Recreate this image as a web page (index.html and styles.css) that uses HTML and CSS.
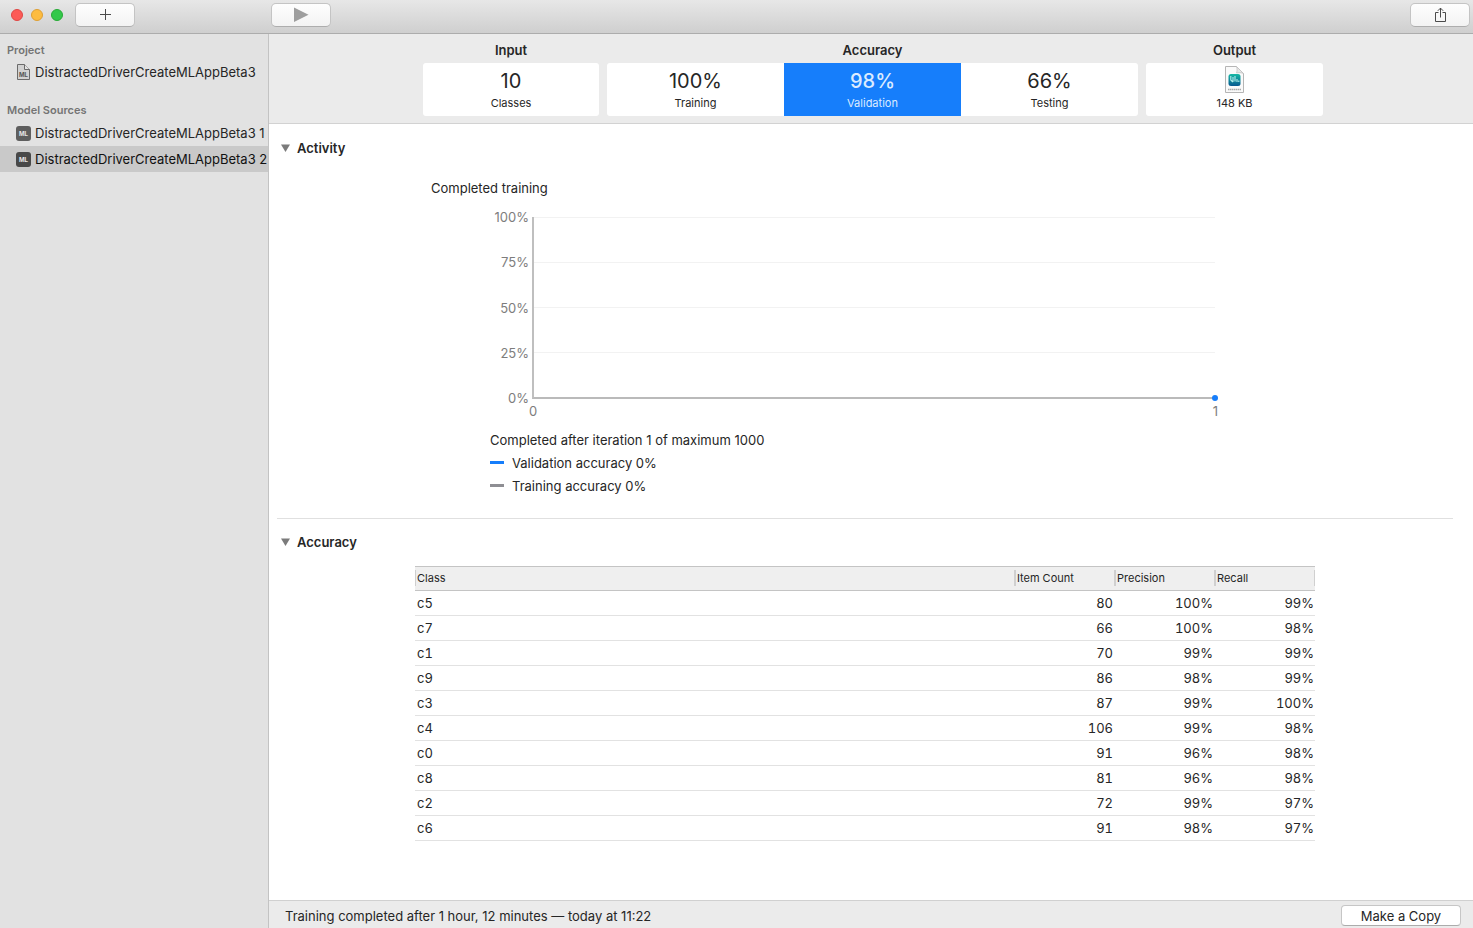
FILE: index.html
```html
<!DOCTYPE html>
<html lang="en">
<head>
<meta charset="utf-8">
<title>DistractedDriverCreateMLAppBeta3</title>
<link rel="stylesheet" href="styles.css">
</head>
<body>
<div class="window">
  <header class="titlebar">
    <div class="titlebar-left">
      <div class="lights">
        <button class="light light-close" aria-label="Close"></button>
        <button class="light light-minimize" aria-label="Minimize"></button>
        <button class="light light-zoom" aria-label="Zoom"></button>
      </div>
      <button class="tool-button" aria-label="Add">
        <svg width="12" height="12" viewBox="0 0 12 12"><path d="M6.500 0v11M1 5.500h11" stroke="#4a4a4a" fill="none"/></svg>
      </button>
    </div>
    <button class="tool-button" aria-label="Train">
      <svg width="16" height="16" viewBox="0 0 16 16"><path d="M1 0.5L15.5 7.8L1 15z" fill="#9e9e9e"/></svg>
    </button>
    <button class="tool-button share" aria-label="Share">
      <svg width="12" height="16" viewBox="0 0 12 16"><path d="M4.500 5.500h-3v9h10v-9h-3M6.500 10.500V1M3.800 3.800L6.500 1.100L9.200 3.800" stroke="#4a4a4a" fill="none"/></svg>
    </button>
  </header>

  <nav class="sidebar">
    <h2 class="side-title">Project</h2>
    <a class="side-item" href="#project">
      <svg class="side-icon" width="15" height="18" viewBox="0 0 15 18"><path d="M1.500 1.500h7l5 5v10h-12z" fill="#d2d2d2" stroke="#6b6b6b"/><path d="M8.500 1.500v5h5" fill="#e4e4e4" stroke="#6b6b6b"/><text class="doc-ml" x="7.500" y="14" text-anchor="middle">ML</text></svg>
      <span>DistractedDriverCreateMLAppBeta3</span>
    </a>
    <h2 class="side-title side-title-sources">Model Sources</h2>
    <a class="side-item" href="#source-1"><span class="side-icon ml-badge">ML</span><span>DistractedDriverCreateMLAppBeta3 1</span></a>
    <a class="side-item selected" href="#source-2"><span class="side-icon ml-badge">ML</span><span>DistractedDriverCreateMLAppBeta3 2</span></a>
  </nav>

  <main class="main">
    <section class="summary">
      <div class="group">
        <h2 class="group-title">Input</h2>
        <div class="cards"><button class="card"><span class="value">10</span><span class="caption">Classes</span></button></div>
      </div>
      <div class="group group-wide">
        <h2 class="group-title">Accuracy</h2>
        <div class="cards">
          <button class="card"><span class="value">100%</span><span class="caption">Training</span></button>
          <button class="card card-active"><span class="value">98%</span><span class="caption">Validation</span></button>
          <button class="card"><span class="value">66%</span><span class="caption">Testing</span></button>
        </div>
      </div>
      <div class="group">
        <h2 class="group-title">Output</h2>
        <div class="cards"><button class="card">
          <span class="value">
            <svg width="22" height="28" viewBox="0 0 22 28">
              <defs><linearGradient id="teal" x1="0" y1="0" x2="0" y2="1"><stop offset="0" stop-color="#17b9a5"/><stop offset="1" stop-color="#075990"/></linearGradient></defs>
              <path d="M1.500 .5h11l7 7v19h-18z" fill="#fafafa" stroke="#b5b5b5"/>
              <path d="M12.500 .5c1 3 .5 5 0 6.500c2-.5 5-.5 7 .5z" fill="#e6e6e6" stroke="#c0c0c0" stroke-width=".7"/>
              <rect x="4.500" y="8" width="12" height="12" rx="2.500" fill="url(#teal)"/>
              <path d="M6.800 10v4l2 2M9 11v5M11 10v5.500M13 13v3M14.800 14.500v1.500" stroke="#b5efec" stroke-width="1.100" fill="none"/>
              <path d="M4 23.500h13" stroke="#a8a8a8" stroke-width="1.500" stroke-dasharray="1.500 .5"/>
            </svg>
          </span>
          <span class="caption">148 KB</span></button></div>
      </div>
    </section>

    <div class="content">
      <details class="section" open>
        <summary class="section-title"><svg width="9" height="8" viewBox="0 0 9 8"><path d="M0 .5h9L4.500 8z" fill="#7b7b7b"/></svg>Activity</summary>
        <div class="activity">
          <p class="status">Completed training</p>
          <div class="chart">
            <div class="y-labels"><span>100%</span><span>75%</span><span>50%</span><span>25%</span><span>0%</span></div>
            <div class="plot"><i class="grid-line"></i><i class="grid-line"></i><i class="grid-line"></i><i class="grid-line"></i><i class="dot"></i></div>
            <div class="x-labels"><span>0</span><span>1</span></div>
          </div>
          <div class="legend">
            <p>Completed after iteration 1 of maximum 1000</p>
            <p class="key"><i class="swatch swatch-blue"></i>Validation accuracy 0%</p>
            <p class="key"><i class="swatch"></i>Training accuracy 0%</p>
          </div>
        </div>
      </details>
      <details class="section section-ruled" open>
        <summary class="section-title"><svg width="9" height="8" viewBox="0 0 9 8"><path d="M0 .5h9L4.500 8z" fill="#7b7b7b"/></svg>Accuracy</summary>
        <table class="results">
          <thead><tr><th><span>Class</span></th><th class="num"><span>Item Count</span></th><th class="num"><span>Precision</span></th><th class="num last"><span>Recall</span></th></tr></thead>
          <tbody>
            <tr><td>c5</td><td>80</td><td>100%</td><td>99%</td></tr>
            <tr><td>c7</td><td>66</td><td>100%</td><td>98%</td></tr>
            <tr><td>c1</td><td>70</td><td>99%</td><td>99%</td></tr>
            <tr><td>c9</td><td>86</td><td>98%</td><td>99%</td></tr>
            <tr><td>c3</td><td>87</td><td>99%</td><td>100%</td></tr>
            <tr><td>c4</td><td>106</td><td>99%</td><td>98%</td></tr>
            <tr><td>c0</td><td>91</td><td>96%</td><td>98%</td></tr>
            <tr><td>c8</td><td>81</td><td>96%</td><td>98%</td></tr>
            <tr><td>c2</td><td>72</td><td>99%</td><td>97%</td></tr>
            <tr><td>c6</td><td>91</td><td>98%</td><td>97%</td></tr>
          </tbody>
        </table>
      </details>
    </div>

    <footer class="statusbar">
      <span>Training completed after 1 hour, 12 minutes — today at 11:22</span>
      <button class="copy-button">Make a Copy</button>
    </footer>
  </main>
</div>
</body>
</html>
```
FILE: styles.css
```css
* { box-sizing: border-box; }

body {
  margin: 0;
  font-family: Inter, Roboto, sans-serif;
  font-size: 13px;
  line-height: 16px;
  color: #262626;
}

h2, p { margin: 0; font-size: inherit; }
button { font: inherit; color: inherit; border: 0; padding: 0; }
svg { display: block; }

.window {
  height: 100vh;
  display: grid;
  grid-template: auto minmax(0, 1fr) / 269px minmax(0, 1fr);
}

/* Title bar */
.titlebar {
  grid-column: 1 / -1;
  display: flex;
  align-items: flex-start;
  height: 34px;
  padding: 3px 3px 0 0;
  background: linear-gradient(#e7e7e7, #cfcfcf);
  border-bottom: 1px solid #acacac;
}
.titlebar-left { display: flex; width: 271px; padding-left: 11px; }
.lights { display: flex; gap: 8px; padding-top: 6px; margin-right: 12px; }
.light { width: 12px; height: 12px; border-radius: 50%; }
.light-close { background: #fc5b57; border: 1px solid #df4744; }
.light-minimize { background: #fdbc40; border: 1px solid #de9f34; }
.light-zoom { background: #34c84a; border: 1px solid #27aa35; }
.tool-button {
  display: flex;
  align-items: center;
  justify-content: center;
  width: 60px;
  height: 24px;
  border: 1px solid #c4c4c4;
  border-bottom-color: #adadad;
  border-radius: 5px;
  background: linear-gradient(#fefefe, #f3f3f3);
}
.share { margin-left: auto; }

/* Sidebar */
.sidebar { background: #e2e2e2; border-right: 1px solid #c3c3c3; padding-top: 8px; overflow: hidden; }
.side-title { padding-left: 7px; font-size: 11px; font-weight: 600; color: #747474; }
.side-title-sources { margin-top: 17px; margin-bottom: 2px; }
.side-item {
  display: flex;
  align-items: center;
  height: 26px;
  padding-left: 16px;
  gap: 4px;
  color: #262626;
  text-decoration: none;
  white-space: nowrap;
}
.side-title + .side-item { margin-top: 1px; }
.selected { background: #c9c9c9; color: #111; }
.side-icon { flex: none; width: 15px; }
.doc-ml { font-size: 6px; font-weight: 700; fill: #555; }
.ml-badge {
  height: 15px;
  border-radius: 3px;
  background: #5e5e5e;
  color: #e8e8e8;
  font-size: 6px;
  font-weight: 700;
  line-height: 15px;
  text-align: center;
}
.selected .ml-badge { background: #484848; }

/* Main column */
.main { display: flex; flex-direction: column; min-width: 0; }
.summary {
  display: grid;
  grid-template-columns: minmax(0, 176px) minmax(0, 531px) minmax(0, 177px);
  justify-content: center;
  gap: 8px;
  padding: 8px 0 7px 4px;
  background: #ebebeb;
  border-bottom: 1px solid #d2d2d2;
}
.group-title { margin-bottom: 5px; font-weight: 600; text-align: center; }
.cards { display: flex; border-radius: 3px; overflow: hidden; }
.card {
  flex: 1;
  display: flex;
  flex-direction: column;
  align-items: center;
  height: 53px;
  padding-top: 3px;
  background: #fff;
}
.card-active { background: #167efb; color: #dcebff; }
.card-active .value { font-weight: 500; }
.value { height: 29px; font-size: 20px; line-height: 30px; }
.caption { font-size: 11px; }

.content { flex: 1; min-height: 0; overflow: auto; padding: 0 20px 0 8px; background: #fff; }
.section { padding-top: 16px; }
.section-ruled { padding-top: 15px; border-top: 1px solid #e0e0e0; }
.section-title { display: flex; align-items: center; gap: 7px; padding-left: 4px; font-weight: 600; list-style: none; }

.activity { max-width: 900px; margin: 24px auto 0; padding: 0 16px 24px; }
.chart {
  display: grid;
  grid-template-columns: 98px minmax(0, 1fr);
  margin: 13px 84px 0 0;
  color: #7d7d7d;
}
.y-labels {
  display: flex;
  flex-direction: column;
  justify-content: space-between;
  height: 197px;
  text-align: right;
}
.plot {
  position: relative;
  display: flex;
  flex-direction: column;
  justify-content: space-between;
  height: 182px;
  margin: 8px 0 0 3px;
  border-left: 2px solid #bfbfbf;
  border-bottom: 2px solid #bababa;
}
.grid-line { height: 45px; border-top: 1px solid #f2f2f2; }
.dot { position: absolute; right: -3px; bottom: -4px; width: 6px; height: 6px; border-radius: 50%; background: #167efb; }
.x-labels { grid-column: 2; display: flex; justify-content: space-between; margin: -3px -3px 0 0; }
.legend { display: grid; gap: 7px; margin-top: 13px; padding-left: 59px; }
.key { display: flex; align-items: center; gap: 8px; }
.swatch { width: 14px; height: 3px; margin-bottom: 2px; background: #8e8e93; }
.swatch-blue { background: #167efb; }

/* Results table */
.results {
  width: 100%;
  max-width: 900px;
  margin: 16px auto 0;
  table-layout: fixed;
  border-collapse: separate;
  border-spacing: 0;
  font-variant-numeric: tabular-nums;
}
.results th {
  height: 25px;
  padding: 0 0 1px;
  font-size: 11px;
  font-weight: 400;
  text-align: left;
  background: #efefef;
  border-top: 1px solid #c4c4c4;
  border-bottom: 1px solid #c4c4c4;
}
.results th span { display: block; padding-left: 1px; border-left: 1px solid #cfcfcf; }
.results .num { width: 100px; }
.results .num span { border-left: 2px solid #d0d0d0; }
.results .num.last { width: 101px; }
.results .last span { border-right: 1px solid #d0d0d0; }
.results td { height: 25px; padding: 0 1px 0 2px; text-align: right; border-bottom: 1px solid #e2e2e2; }
.results td:first-child { text-align: left; }

/* Status bar */
.statusbar {
  display: flex;
  align-items: center;
  justify-content: space-between;
  height: 28px;
  padding: 2px 12px 0 16px;
  background: #ebebeb;
  border-top: 1px solid #d0d0d0;
}
.copy-button {
  width: 120px;
  height: 21px;
  border: 1px solid #c6c6c6;
  border-bottom-color: #acacac;
  border-radius: 4px;
  background: #fff;
}
```
